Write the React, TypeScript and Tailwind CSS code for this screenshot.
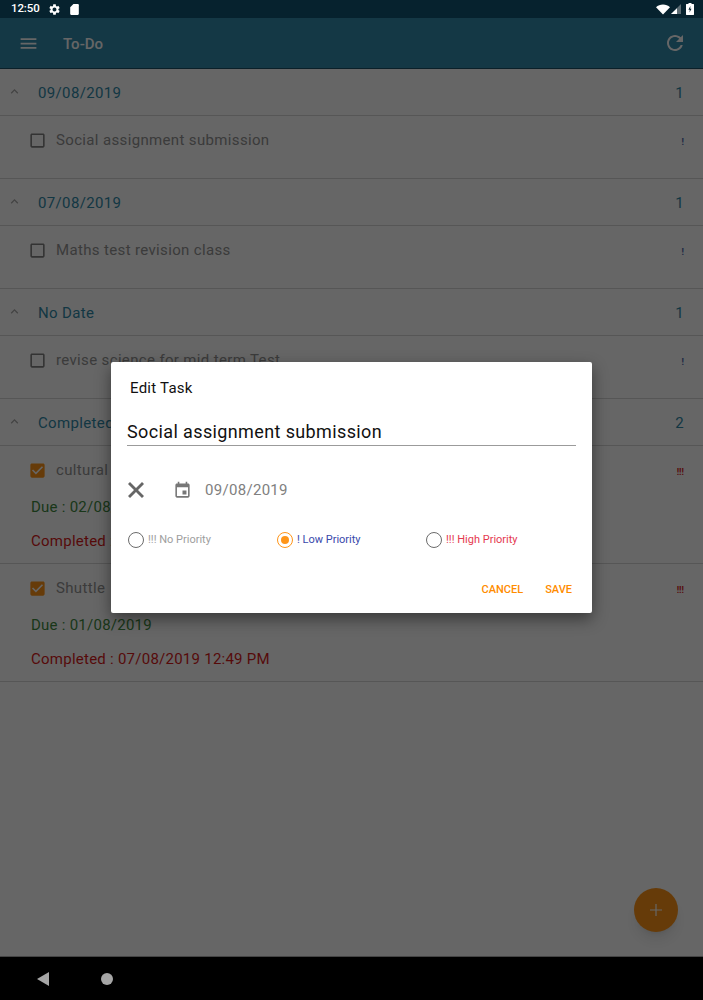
import React from 'react';

interface IconProps {
  d: string;
  className?: string;
}

const Icon = ({ d, className }: IconProps) => (
  <svg viewBox="0 0 24 24" className={className} fill="currentColor">
    <path d={d} />
  </svg>
);

const MENU = 'M3 18h18v-2H3v2zm0-5h18v-2H3v2zm0-7v2h18V6H3z';
const REFRESH =
  'M17.65 6.35C16.2 4.9 14.21 4 12 4c-4.42 0-7.99 3.58-7.99 8s3.57 8 7.99 8c3.73 0 6.84-2.55 7.73-6h-2.08c-.82 2.33-3.04 4-5.65 4-3.31 0-6-2.69-6-6s2.69-6 6-6c1.66 0 3.14.69 4.22 1.78L13 11h7V4l-2.35 2.35z';
const EVENT =
  'M17 12h-5v5h5v-5zM16 1v2H8V1H6v2H5c-1.11 0-1.99.9-1.99 2L3 19c0 1.1.89 2 2 2h14c1.1 0 2-.9 2-2V5c0-1.1-.9-2-2-2h-1V1h-2zm3 18H5V8h14v11z';
const CLOSE = 'M20 6 18 4 12 10 6 4 4 6 10 12 4 18 6 20 12 14 18 20 20 18 14 12z';
const GEAR =
  'M19.14 12.94c.04-.3.06-.61.06-.94 0-.32-.02-.64-.07-.94l2.03-1.58c.18-.14.23-.41.12-.61l-1.92-3.32c-.12-.22-.37-.29-.59-.22l-2.39.96c-.5-.38-1.03-.7-1.62-.94l-.36-2.54c-.04-.24-.24-.41-.48-.41h-3.84c-.24 0-.43.17-.47.41l-.36 2.54c-.59.24-1.13.57-1.62.94l-2.39-.96c-.22-.08-.47 0-.59.22L2.74 8.87c-.12.21-.08.47.12.61l2.03 1.58c-.05.3-.09.63-.09.94s.02.64.07.94l-2.03 1.58c-.18.14-.23.41-.12.61l1.92 3.32c.12.22.37.29.59.22l2.39-.96c.5.38 1.03.7 1.62.94l.36 2.54c.05.24.24.41.48.41h3.84c.24 0 .44-.17.47-.41l.36-2.54c.59-.24 1.13-.56 1.62-.94l2.39.96c.22.08.47 0 .59-.22l1.92-3.32c.12-.22.07-.47-.12-.61l-2.01-1.58zM12 15.6c-1.98 0-3.6-1.62-3.6-3.6s1.62-3.6 3.6-3.6 3.6 1.62 3.6 3.6-1.62 3.6-3.6 3.6z';
const SD = 'M18 2h-8L4.02 8 4 20c0 1.1.9 2 2 2h12c1.1 0 2-.9 2-2V4c0-1.1-.9-2-2-2z';
const BOX =
  'M19 5v14H5V5h14m0-2H5c-1.1 0-2 .9-2 2v14c0 1.1.9 2 2 2h14c1.1 0 2-.9 2-2V5c0-1.1-.9-2-2-2z';
const BOX_CHECKED =
  'M19 3H5c-1.11 0-2 .9-2 2v14c0 1.1.89 2 2 2h14c1.11 0 2-.9 2-2V5c0-1.1-.89-2-2-2zm-9 14l-5-5 1.41-1.41L10 14.17l7.59-7.59L19 8l-9 9z';
const CHEVRON = 'M7.41 15.41L12 10.83l4.59 4.58L18 14l-6-6-6 6z';

const SectionHeader = ({ title, count }: { title: string; count: number }) => (
  <div className="flex h-[47px] items-center border-b border-[#d8d8d8] pr-[19px] text-[15px] tracking-[0.35px] text-[#318aa9]">
    <Icon d={CHEVRON} className="ml-[7px] h-[15px] w-[15px] -translate-y-[1px] text-[#a8a8a8]" />
    <span className="ml-[16px] flex-1 pt-[2px]">{title}</span>
    <span className="pt-[2px]">{count}</span>
  </div>
);

interface TaskRowProps {
  title: string;
  priority: string;
  priorityClass: string;
  done?: boolean;
  due?: string;
  completed?: string;
}

const TaskRow = ({ title, priority, priorityClass, done, due, completed }: TaskRowProps) => (
  <div className="border-b border-[#d8d8d8]">
    <div className="flex h-[48px] items-center pr-[19px]">
      {done ? (
        <Icon d={BOX_CHECKED} className="ml-[28px] h-[19px] w-[19px] text-[#ff9518]" />
      ) : (
        <Icon d={BOX} className="ml-[28px] h-[19px] w-[19px] text-[#808080]" />
      )}
      <span className="ml-[9px] flex-1 text-[15px] tracking-[0.35px] text-[#949494]">{title}</span>
      <span className={`pt-[6px] text-[9px] font-bold ${priorityClass}`}>{priority}</span>
    </div>
    {due ? (
      <div className="pb-[12px] pl-[31px] text-[15px] tracking-[0.25px]">
        <p className="mt-[2px] h-[34px] text-[#3f8a3f]">Due : {due}</p>
        <p className="h-[21px] text-[#d81b1b]">Completed : {completed}</p>
      </div>
    ) : (
      <div className="h-[14px]" />
    )}
  </div>
);

interface PriorityRadioProps {
  label: string;
  labelClass: string;
  width: string;
  selected?: boolean;
}

const PriorityRadio = ({ label, labelClass, width, selected }: PriorityRadioProps) => (
  <div className={`flex items-center ${width}`}>
    {selected ? (
      <span className="flex h-[16px] w-[16px] items-center justify-center rounded-full border-[1.5px] border-[#ff9518]">
        <span className="h-[8px] w-[8px] rounded-full bg-[#ff9518]" />
      </span>
    ) : (
      <span className="h-[16px] w-[16px] rounded-full border-[1.5px] border-[#6b6b6b]" />
    )}
    <span className={`ml-[4px] text-[11px] ${labelClass}`}>{label}</span>
  </div>
);

const App = () => {
  return (
    <div className="flex h-[1000px] w-[703px] flex-col overflow-hidden bg-white font-['Roboto',sans-serif]">
      {/* status bar */}
      <div className="flex h-[18px] items-center bg-[#06222e] pl-[11px] pr-[9px] text-white">
        <span className="text-[11.5px] font-medium tracking-[-0.1px]">12:50</span>
        <Icon d={GEAR} className="ml-[8px] h-[13px] w-[13px]" />
        <Icon d={SD} className="ml-[7px] h-[13px] w-[13px]" />
        <div className="ml-auto flex items-center">
          <svg viewBox="0 0 14 11" className="h-[11px] w-[14px]" fill="currentColor">
            <path d="M0 3.200C1.800 1.400 4.300.4 7 .4s5.200 1 7 2.800L7 10.600z" />
          </svg>
          <svg viewBox="0 0 10 10" className="ml-[1px] h-[10px] w-[10px]">
            <path d="M10 0v10H0z" fill="#5b6b72" />
            <path d="M6 4.200V10H0z" fill="#ffffff" />
          </svg>
          <svg viewBox="0 0 8 12" className="ml-[5px] h-[12px] w-[8px]">
            <path d="M2.500 0h3v1H7.500c.3 0 .5.2.5.5v10c0 .3-.2.5-.5.5h-7c-.3 0-.5-.2-.5-.5v-10C0 1.200.2 1 .5 1h2z" fill="#ffffff" />
            <path d="M4.400 3 2.400 6.800h1.400L3.500 9.500l2-3.800H4.200z" fill="#06222e" />
          </svg>
        </div>
      </div>

      <div className="relative flex flex-1 flex-col">
        {/* app bar */}
        <div className="flex h-[51px] items-center border-b border-[#1d5266] bg-[#328cad] text-white">
          <Icon d={MENU} className="ml-[18px] h-[21px] w-[21px]" />
          <span className="ml-[24px] pt-[3px] text-[15px] font-medium">To-Do</span>
          <Icon d={REFRESH} className="ml-auto mr-[16px] h-[24px] w-[24px]" />
        </div>

        {/* task list */}
        <SectionHeader title="09/08/2019" count={1} />
        <TaskRow title="Social assignment submission" priority="!" priorityClass="text-[#4a60a8]" />
        <SectionHeader title="07/08/2019" count={1} />
        <TaskRow title="Maths test revision class" priority="!" priorityClass="text-[#4a60a8]" />
        <SectionHeader title="No Date" count={1} />
        <TaskRow title="revise science for mid term Test" priority="!" priorityClass="text-[#4a60a8]" />
        <SectionHeader title="Completed" count={2} />
        <TaskRow
          done
          title="cultural"
          priority="!!!"
          priorityClass="text-[#d81b1b]"
          due="02/08/2019"
          completed="07/08/2019 12:49 PM"
        />
        <TaskRow
          done
          title="Shuttle"
          priority="!!!"
          priorityClass="text-[#d81b1b]"
          due="01/08/2019"
          completed="07/08/2019 12:49 PM"
        />

        {/* fab */}
        <button className="absolute left-[634px] top-[870px] flex h-[44px] w-[44px] items-center justify-center rounded-full bg-[#ff9518] text-[#ffffff] shadow-lg">
          <svg viewBox="0 0 14 14" className="h-[14px] w-[14px]" fill="currentColor">
            <path d="M6.400 1h1.200v5.400H13v1.200H7.600V13H6.400V7.600H1V6.400h5.400z" />
          </svg>
        </button>

        {/* scrim */}
        <div className="absolute inset-0 bg-black/60" />

        {/* dialog */}
        <div className="absolute left-[111px] top-[344px] h-[251px] w-[481px] rounded-[2px] bg-white shadow-[0_6px_16px_rgba(0,0,0,0.45)]">
          <h2 className="ml-[19px] mt-[16px] text-[15px] leading-[20px] tracking-[0.25px] text-[#111]">Edit Task</h2>
          <div className="mx-[16px] mt-[22px] border-b border-[#9b9b9b] pb-[1px] text-[18px] leading-[24px] tracking-[0.38px] text-[#111]">
            Social assignment submission
          </div>
          <div className="mt-[31px] flex h-[26px] items-center">
            <Icon d={CLOSE} className="ml-[13px] h-[24px] w-[24px] text-[#666]" />
            <Icon d={EVENT} className="ml-[25px] h-[19px] w-[19px] text-[#777]" />
            <span className="ml-[13px] text-[15px] tracking-[0.3px] text-[#808080]">09/08/2019</span>
          </div>
          <div className="ml-[17px] mt-[27px] flex h-[20px] items-center">
            <PriorityRadio width="w-[149px]" label="!!! No Priority" labelClass="text-[#9e9e9e]" />
            <PriorityRadio width="w-[149px]" label="! Low Priority" labelClass="text-[#3949ab]" selected />
            <PriorityRadio width="w-[149px]" label="!!! High Priority" labelClass="text-[#e53950]" />
          </div>
          <div className="mr-[20px] mt-[32px] flex justify-end gap-[22px] text-[11px] font-medium text-[#ff8c00]">
            <span>CANCEL</span>
            <span>SAVE</span>
          </div>
        </div>
      </div>

      {/* nav bar */}
      <div className="flex h-[44px] items-center border-t border-[#444] bg-black">
        <svg viewBox="0 0 12 14" className="ml-[37px] h-[14px] w-[12px] text-[#a6a6a6]" fill="currentColor">
          <path d="M12 0v14L0 7z" />
        </svg>
        <span className="ml-[52px] h-[12px] w-[12px] rounded-full bg-[#a6a6a6]" />
      </div>
    </div>
  );
};

export default App;
